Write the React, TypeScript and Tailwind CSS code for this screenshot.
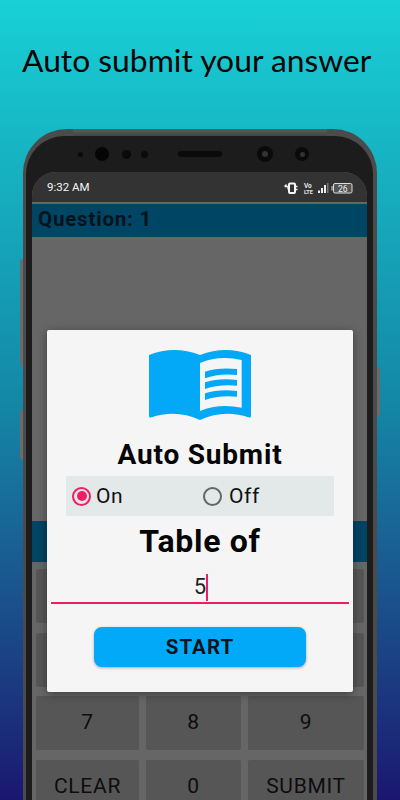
const keys = [
  ["1", "2", "3"],
  ["4", "5", "6"],
  ["7", "8", "9"],
  ["CLEAR", "0", "SUBMIT"],
];

function Book() {
  return (
    <svg width="102" height="72" viewBox="0 0 102 72" className="block">
      <path
        d="M0 6 Q25 -4 51 6 Q77 -4 102 6 V67 Q102 69 100 68.500 Q75 60 51 71 Q27 60 2 68.500 Q0 69 0 67 Z"
        fill="#03a9f7"
      />
      <path d="M51 14 Q70 6 92.700 11 V58.700 Q70 54 51 62 Z" fill="#f5f5f5" />
      <path d="M56 22.700 Q70 18 88 20 V26 Q70 24 56 29.300 Z" fill="#03a9f7" />
      <path d="M56 33.300 Q70 29 88 31 V36.700 Q70 35 56 40 Z" fill="#03a9f7" />
      <path d="M56 44.300 Q70 40 88 42 V47.700 Q70 46 56 51 Z" fill="#03a9f7" />
    </svg>
  );
}

function StatusIcons() {
  return (
    <svg width="70" height="14" viewBox="0 0 70 14" className="block">
      <rect x="5" y="2.500" width="6" height="9.500" rx="1" fill="none" stroke="#f5f5f5" strokeWidth="2" />
      <path d="M0.500 5.500 H4 V8.500 M0.500 5.500 L2.500 3.500 M12 5.500 H13.500 M12 8.500 H13.500" stroke="#f0f0f0" strokeWidth="1.300" fill="none" />
      <text x="20" y="6.500" fontSize="6.500" fontFamily="Roboto, sans-serif" fontWeight="700" fill="#e5e5e5">Vo</text>
      <text x="20" y="13" fontSize="5.500" fontFamily="Roboto, sans-serif" fontWeight="700" fill="#e5e5e5">LTE</text>
      <rect x="34" y="9.500" width="2" height="2.500" fill="#eee" />
      <rect x="37" y="7" width="2" height="5" fill="#eee" />
      <rect x="40" y="4" width="2" height="8" fill="#eee" />
      <rect x="43" y="2" width="1.500" height="10" fill="#777" />
      <path d="M48 5 V9.500" stroke="#ddd" strokeWidth="1" />
      <rect x="49.500" y="2.500" width="18.500" height="9.500" rx="1.500" fill="#555" stroke="#ddd" strokeWidth="1" />
      <text x="58.800" y="10.500" fontSize="8.500" textAnchor="middle" fontFamily="Roboto, sans-serif" fill="#f0f0f0">26</text>
    </svg>
  );
}

function Radio({ on, label }: { on?: boolean; label: string }) {
  return (
    <div className={`flex items-center ${on ? "gap-[5px]" : "gap-[7px]"}`}>
      <span
        className={`flex h-[19px] w-[19px] items-center justify-center rounded-full border-2 ${
          on ? "border-[#f01e64]" : "border-[#666666]"
        }`}
      >
        {on && <span className="h-[10px] w-[10px] rounded-full bg-[#f01e64]" />}
      </span>
      <span className="text-[21px] leading-none tracking-[0.6px] text-[#111111]">{label}</span>
    </div>
  );
}

export default function App() {
  return (
    <div className="relative flex h-[800px] w-[400px] flex-col overflow-hidden bg-gradient-to-b from-[#19d0d6] via-[#1488a6] to-[#1b1570] font-['Roboto',sans-serif]">
      <h1 className="h-[129px] shrink-0 pl-[22px] pt-[40px] font-['Lato',sans-serif] text-[31.800px] leading-[40px] font-normal whitespace-nowrap text-[#050505]">
        Auto submit your answer
      </h1>

      <div className="relative mx-[23px] h-[671px] shrink-0 rounded-t-[44px] bg-[#4b4b4b] pr-[4px] pl-[3px] pt-[7px]">
        <span className="absolute top-0 right-[50px] left-[50px] h-[7px] bg-gradient-to-b from-[#5c5c5c] to-[#444444]" />
        <span className="absolute top-[130px] left-[-3px] h-[107px] w-[3px] rounded-l bg-[#6a6a6a]" />
        <span className="absolute top-[281px] left-[-3px] h-[50px] w-[3px] rounded-l bg-[#6a6a6a]" />
        <span className="absolute top-[238px] right-[-3px] h-[50px] w-[3px] rounded-r bg-[#6a6a6a]" />

        <div className="flex h-full flex-col rounded-t-[38px] bg-[#1c1c1c] px-[6px]">
          <div className="relative h-[36px] shrink-0">
            <span className="absolute top-[16px] left-[46px] h-[5px] w-[5px] rounded-full bg-[#0a0a0a]" />
            <span className="absolute top-[11px] left-[63px] h-[14px] w-[14px] rounded-full bg-[#050505]" />
            <span className="absolute top-[14px] left-[90px] h-[9px] w-[9px] rounded-full bg-[#0a0a0a]" />
            <span className="absolute top-[15px] left-[109px] h-[7px] w-[7px] rounded-full bg-[#0a0a0a]" />
            <span className="absolute top-[15px] left-[146px] h-[6px] w-[44px] rounded-full bg-[#0a0a0a]" />
            <span className="absolute top-[10px] left-[225px] flex h-[16px] w-[16px] items-center justify-center rounded-full bg-[#0a0a0a]">
              <span className="h-[6px] w-[6px] rounded-full bg-[#333333]" />
            </span>
            <span className="absolute top-[11px] left-[263px] flex h-[14px] w-[14px] items-center justify-center rounded-full bg-[#0a0a0a]">
              <span className="h-[5px] w-[5px] rounded-full bg-[#333333]" />
            </span>
          </div>

          <div className="flex min-h-0 flex-1 flex-col overflow-hidden rounded-t-[24px] bg-[#666666]">
            <div className="flex h-[30px] shrink-0 items-center justify-between bg-[#333333] pt-[1px] pr-[13px] pl-[15px]">
              <span className="text-[11.500px] leading-none text-[#f5f5f5]">9:32 AM</span>
              <StatusIcons />
            </div>
            <div className="h-[2px] shrink-0 bg-[#666666]" />
            <div className="flex h-[33px] shrink-0 items-center bg-[#004563] pb-[3px] pl-[6px] text-[20.500px] font-bold tracking-[0.8px] text-[#00131d]">
              Question: 1
            </div>
            <div className="h-[284px] shrink-0" />
            <div className="h-[41px] shrink-0 bg-[#004563]" />
            <div className="grid grid-cols-[103px_95px_116px] gap-x-[7px] gap-y-[9.500px] pt-[7px] pl-[4px]">
              {keys.flat().map((k) => (
                <div
                  key={k}
                  className="flex h-[54px] items-center justify-center rounded-[2px] bg-[#565656] text-[21px] tracking-[0.7px] text-[#0d0d0d]"
                >
                  {k}
                </div>
              ))}
            </div>
          </div>
        </div>
      </div>

      <div className="absolute top-[330px] left-[47px] flex h-[362px] w-[306px] flex-col items-center rounded-[2px] bg-[#f5f5f5] pt-[19px] shadow-[0_2px_10px_rgba(0,0,0,0.4)]">
        <Book />
        <div className="mt-[17px] text-[28px] leading-[34px] font-bold tracking-[0.8px] text-[#050505]">Auto Submit</div>
        <div className="mt-[4px] flex h-[40px] w-[268px] items-center bg-[#e2e9e8] pl-[6px]">
          <div className="w-[131px]">
            <Radio on label="On" />
          </div>
          <Radio label="Off" />
        </div>
        <div className="mt-[6px] text-[32px] leading-[38px] font-bold tracking-[0.7px] text-[#050505]">Table of</div>
        <div className="mt-[8px] flex h-[36px] w-[298px] items-center justify-center border-b-2 border-[#ee1c62] pt-[4px] pl-[2px]">
          <span className="text-[22px] leading-none text-[#222222]">5</span>
          <span className="h-[27px] w-[2px] bg-[#ee1c62]" />
        </div>
        <div className="mt-[23px] flex h-[40px] w-[212px] items-center justify-center rounded-[8px] bg-[#03a9f9] text-[20.500px] font-bold tracking-[1px] text-[#0a1418] shadow-[0_1px_3px_rgba(0,0,0,0.3)]">
          START
        </div>
      </div>
    </div>
  );
}
